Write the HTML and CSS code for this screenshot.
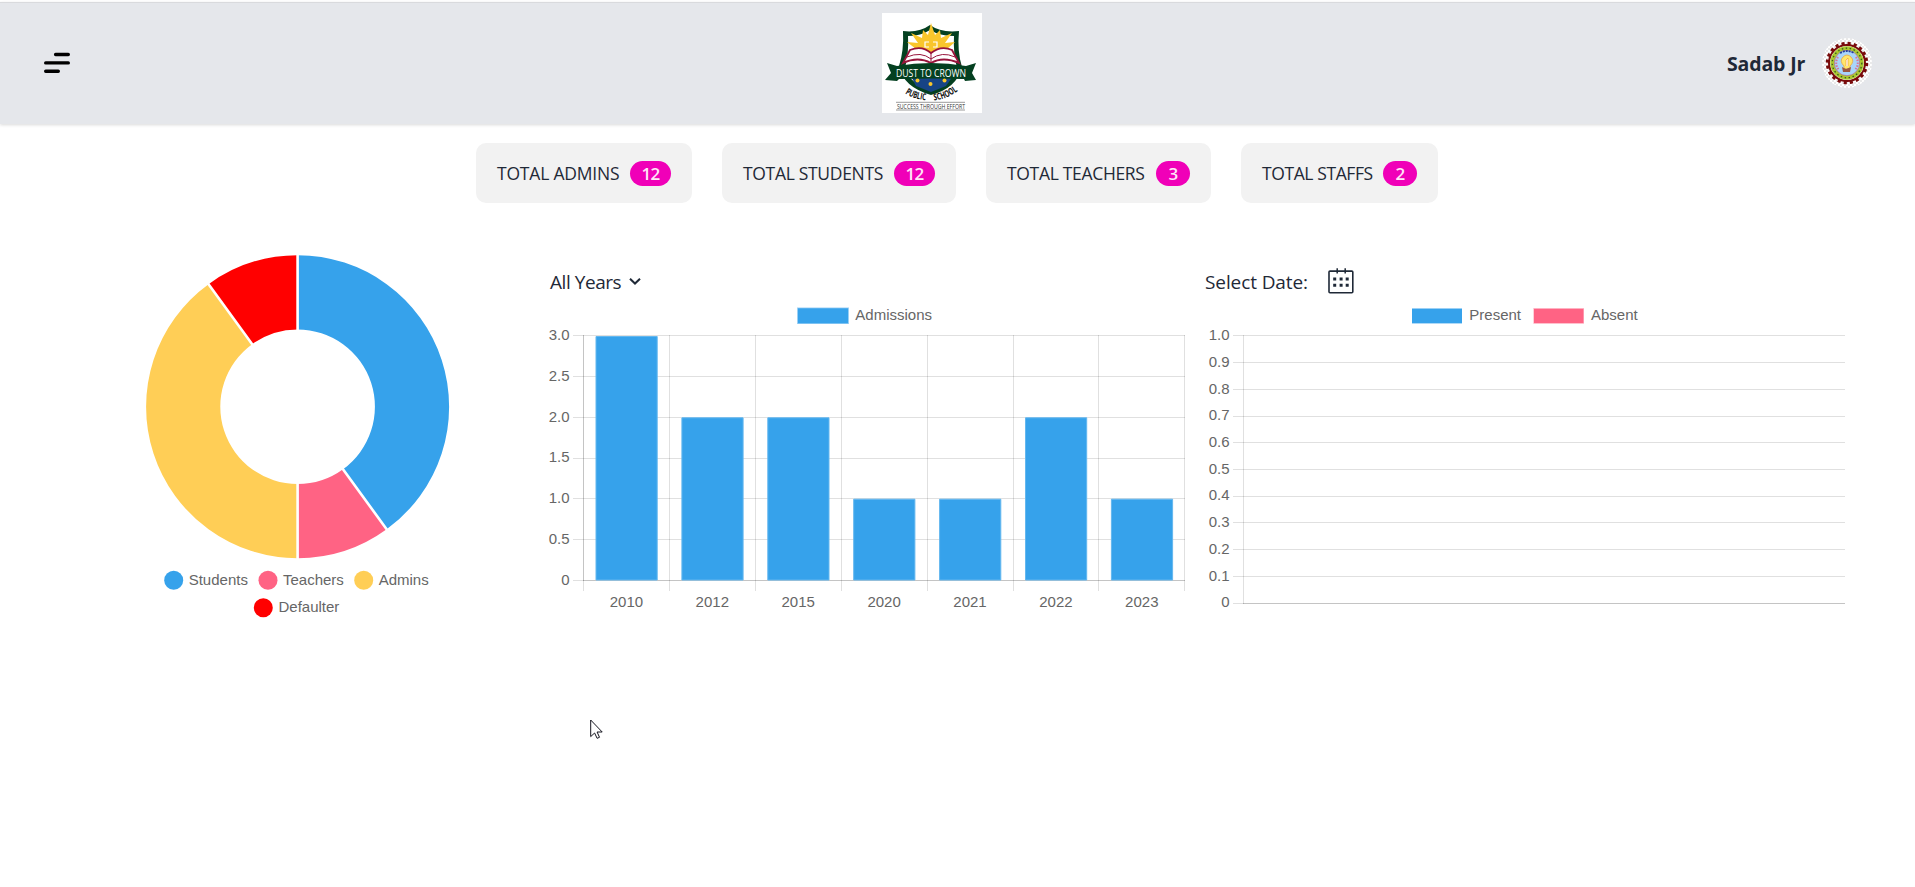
FILE: index.html
```html
<!DOCTYPE html>
<html lang="en">
<head>
<meta charset="utf-8">
<title>School Dashboard</title>
<link rel="stylesheet" href="styles.css">
</head>
<body>
<header class="header">
  <svg class="menu" width="28" height="24" viewBox="0 0 28 24" stroke="#000" stroke-width="3.4" stroke-linecap="round"><path d="M12.6 3.5H25.3M2.7 11.9H25.3M2.7 20.2H15.3"/></svg>
  <svg class="logo" width="100" height="100" viewBox="0 0 100 100">
    <rect width="100" height="100" fill="#fff"/>
    <path d="M48 12Q37 20 21 18Q22 38 17 53Q21 74 49 82Q75 75 80 54Q75 38 77 18Q59 20 48 12Z" fill="#044020"/>
    <path d="M48 17Q39 23 26 23Q27 40 23 55Q28 71 49 77Q69 71 75 55Q71 40 72 23Q58 23 48 17Z" fill="#fff"/>
    <path d="M25 41L34 36L25 29L36 30L29 20L40 25L41 17L46 22L49 10L53 22L58 17L59 25L70 20L63 30L73 29L65 36L73 41Q58 35 49 42Q39 35 25 41Z" fill="#f9c62c"/>
    <path d="M47 29H43V34H47M51 29H55V34H51" fill="none" stroke="#fff" stroke-width="1.2"/>
    <path d="M28 37Q40 32 49 40Q59 32 70 37L77 50Q61 43 49 50Q36 43 21 50Z" fill="#fff" stroke="#97143b" stroke-width="1.8"/>
    <path d="M25 44Q39 38 49 46Q60 38 73 44M49 40V49" fill="none" stroke="#97143b" stroke-width="1"/>
    <path d="M29 63H71L64 73L49 79L34 73Z" fill="#174485"/>
    <path d="M5 50L15 53Q49 47 84 53L94 50L90 60L94 67L83 68L82 66Q49 61 17 66L15 68L3 67L9 60Z" fill="#044020"/>
    <path d="M16 56Q49 50 83 56V66Q49 65 17 66Z" fill="#044020"/>
    <text x="14" y="63.8" class="logo-name" textLength="70" lengthAdjust="spacingAndGlyphs">DUST TO CROWN</text>
    <g fill="#f9c62c"><circle cx="35.5" cy="67.5" r="2"/><circle cx="48.5" cy="71" r="2"/><circle cx="62.5" cy="67.5" r="2"/></g>
    <path id="arc-left" d="M23 80.5Q32 86.5 46 87.5" fill="none"/>
    <path id="arc-right" d="M52 87.5Q66 86 77 77" fill="none"/>
    <text class="logo-sub"><textPath href="#arc-left" textLength="22" lengthAdjust="spacingAndGlyphs">PUBLIC</textPath></text>
    <text class="logo-sub"><textPath href="#arc-right" textLength="26" lengthAdjust="spacingAndGlyphs">SCHOOL</textPath></text>
    <path d="M14 89.3H83M14 97H83" stroke="#555" stroke-width=".6"/>
    <text x="15" y="95.7" class="logo-motto" textLength="68" lengthAdjust="spacingAndGlyphs">SUCCESS THROUGH EFFORT</text>
  </svg>
  <div class="user">
    <span class="user-name">Sadab Jr</span>
    <svg width="50" height="50" viewBox="0 0 50 50">
      <defs><pattern id="check" width="4" height="4" patternUnits="userSpaceOnUse"><rect width="4" height="4" fill="#fff"/><path d="M0 0h2v2H0zM2 2h2v2H2z" fill="#e9e9e9"/></pattern></defs>
      <circle cx="25" cy="25" r="25" fill="url(#check)"/>
      <circle cx="25" cy="25" r="19.5" fill="none" stroke="#790b0b" stroke-width="3.4" stroke-dasharray="3.1 3.026"/>
      <circle cx="25" cy="25" r="18" fill="#fff" stroke="#790b0b" stroke-width="2"/>
      <circle cx="25" cy="25" r="14.8" fill="#a8d5fb" stroke="#a9c92f" stroke-width="3.8"/>
      <circle cx="25" cy="25" r="14.8" fill="none" stroke="#395820" stroke-width="1.3" stroke-dasharray="1.5 2.5"/>
      <circle cx="25" cy="25" r="12.7" fill="none" stroke="#b83b42" stroke-width=".5"/>
      <path d="M18 15Q25 11 32 15" fill="none" stroke="#243f9d" stroke-width="1.8" stroke-dasharray="2 1"/>
      <path d="M16 19Q12 26 17 32M34 19Q38 26 33 32" fill="none" stroke="#d77698" stroke-width="2" stroke-dasharray="1.5 1.4"/>
      <path d="M22 28Q17 23 21 19Q25 15 29 19Q33 23 28 28V31H22Z" fill="#ffe66b" stroke="#e8a943" stroke-width=".8"/>
      <path d="M24 28V22L26 20V28" fill="#fff" stroke="#ef9c31" stroke-width=".7"/>
      <path d="M20 29L24 31L29 29L28 34H21Z" fill="#9b5643"/>
    </svg>
  </div>
</header>

<main>
  <section class="stats">
    <div class="stat"><span class="stat-label w-admins">TOTAL ADMINS</span><span class="badge wide">12</span></div>
    <div class="stat"><span class="stat-label w-students">TOTAL STUDENTS</span><span class="badge wide">12</span></div>
    <div class="stat"><span class="stat-label w-teachers">TOTAL TEACHERS</span><span class="badge">3</span></div>
    <div class="stat"><span class="stat-label w-staffs">TOTAL STAFFS</span><span class="badge">2</span></div>
  </section>

  <section class="charts">
    <svg class="chart" width="340" height="390" viewBox="130 240 340 390">
      <g transform="translate(297.6 406.7)">
        <path d="M0-151.5A151.5 151.5 0 0 1 89.05 122.57L45.44 62.54A77.3 77.3 0 0 0 0-77.3Z" fill="#36a2eb"/>
        <path d="M89.05 122.57A151.5 151.5 0 0 1 0 151.5V77.3A77.3 77.3 0 0 0 45.44 62.54Z" fill="#ff6384"/>
        <path d="M0 151.5A151.5 151.5 0 0 1-89.05-122.57L-45.44-62.54A77.3 77.3 0 0 0 0 77.3Z" fill="#ffce56"/>
        <path d="M-89.05-122.57A151.5 151.5 0 0 1 0-151.5V-77.3A77.3 77.3 0 0 0-45.44-62.54Z" fill="red"/>
        <path d="M0-153V-76M0 153V76M89.93 123.78L44.67 61.49M-89.93-123.78L-44.67-61.49" stroke="#fff" stroke-width="2.6"/>
      </g>
      <circle cx="173.7" cy="580.3" r="9.5" fill="#36a2eb"/><text x="188.7" y="585">Students</text>
      <circle cx="268" cy="580.3" r="9.5" fill="#ff6384"/><text x="283" y="585">Teachers</text>
      <circle cx="363.7" cy="580.3" r="9.5" fill="#ffce56"/><text x="378.7" y="585">Admins</text>
      <circle cx="263.3" cy="607.7" r="9.5" fill="red"/><text x="278.5" y="612">Defaulter</text>
    </svg>

    <div class="panel panel-admissions">
      <div class="control"><span class="w-years">All Years</span>
        <svg width="12" height="8" viewBox="0 0 12 8" fill="none" stroke="#1f2937" stroke-width="2"><path d="M1 .7L6 5.5L11 .7"/></svg>
      </div>
      <svg class="chart" width="650" height="320" viewBox="540 300 650 320">
        <rect x="797" y="307.5" width="52" height="16.5" fill="#9bd0f5"/><rect x="798" y="308.3" width="50" height="15" fill="#36a2eb"/>
        <text x="855.3" y="320">Admissions</text>
        <path d="M573 335.5H1185M573 376.5H1185M573 417.5H1185M573 458.5H1185M573 498.5H1185M573 539.5H1185M573 580.5H1185M583.5 335V591M669.5 335V591M755.5 335V591M841.5 335V591M927.5 335V591M1013.5 335V591M1098.5 335V591M1184.5 335V591" stroke="#000" stroke-opacity=".12"/>
        <path d="M583.5 335V581M583 580.5H1185" stroke="#000" stroke-opacity=".12"/>
        <g fill="#36a2eb" stroke="#63b7ef">
          <path d="M596 580V336.5H657.2V580Z"/><path d="M681.9 580V417.8H743.1V580Z"/><path d="M767.8 580V417.8H829V580Z"/><path d="M853.7 580V499.2H914.9V580Z"/><path d="M939.6 580V499.2H1000.8V580Z"/><path d="M1025.5 580V417.8H1086.7V580Z"/><path d="M1111.4 580V499.2H1172.6V580Z"/>
        </g>
        <g text-anchor="end"><text x="569.5" y="340">3.0</text><text x="569.5" y="381">2.5</text><text x="569.5" y="422">2.0</text><text x="569.5" y="462">1.5</text><text x="569.5" y="503">1.0</text><text x="569.5" y="544">0.5</text><text x="569.5" y="585">0</text></g>
        <g text-anchor="middle"><text x="626.4" y="607">2010</text><text x="712.3" y="607">2012</text><text x="798.2" y="607">2015</text><text x="884.1" y="607">2020</text><text x="970" y="607">2021</text><text x="1055.9" y="607">2022</text><text x="1141.8" y="607">2023</text></g>
      </svg>
    </div>

    <div class="panel panel-attendance">
      <div class="control"><span class="w-date">Select Date:</span>
        <svg class="calendar" width="26" height="26" viewBox="0 0 26 26" fill="none" stroke="#1f2937"><rect x="1" y="3.1" width="23.8" height="21.6" rx="1" stroke-width="1.6"/><path d="M9.2.2V5.5M17.2.2V5.5" stroke-width="1.5"/><path d="M5.2 11.1h3M11.6 11.1h3M17.7 11.1h3M5.2 17.2h3M11.6 17.2h3M17.7 17.2h3" stroke-width="3"/></svg>
      </div>
      <svg class="chart" width="660" height="320" viewBox="1195 300 660 320">
        <rect x="1412" y="308" width="50" height="15.8" fill="#9bd0f5"/><rect x="1412" y="309" width="50" height="14" fill="#36a2eb"/><text x="1469.3" y="320">Present</text>
        <rect x="1533.4" y="308" width="50.5" height="15.8" fill="#ffb1c1"/><rect x="1534" y="309" width="49.4" height="14" fill="#ff6384"/><text x="1591" y="320">Absent</text>
        <path d="M1233 335.5H1845M1233 362.5H1845M1233 389.5H1845M1233 416.5H1845M1233 442.5H1845M1233 469.5H1845M1233 496.5H1845M1233 522.5H1845M1233 549.5H1845M1233 576.5H1845M1233 603.5H1845M1243.5 335V604" stroke="#000" stroke-opacity=".12"/>
        <path d="M1243 603.5H1845" stroke="#000" stroke-opacity=".12"/>
        <g text-anchor="end"><text x="1229.5" y="340">1.0</text><text x="1229.5" y="367">0.9</text><text x="1229.5" y="394">0.8</text><text x="1229.5" y="420">0.7</text><text x="1229.5" y="447">0.6</text><text x="1229.5" y="474">0.5</text><text x="1229.5" y="500">0.4</text><text x="1229.5" y="527">0.3</text><text x="1229.5" y="554">0.2</text><text x="1229.5" y="581">0.1</text><text x="1229.5" y="607">0</text></g>
      </svg>
    </div>
  </section>
</main>
<svg class="cursor" width="14" height="21" viewBox="0 0 14 21"><path d="M.7 1V17.6L4.6 14L7.1 19.3L9.5 18.3L7.1 13H12.2Z" fill="#fff" stroke="#15151f" stroke-width="1"/></svg>
</body>
</html>
```
FILE: styles.css
```css
* { box-sizing: border-box; }
body {
  margin: 0;
  padding-top: 2px;
  height: 887px;
  overflow: hidden;
  background: #fff;
  color: #1f2937;
  font-family: "Open Sans", "Noto Sans", sans-serif;
}
svg { display: block; flex: none; }
.header {
  display: grid;
  grid-template-columns: 882px 100px 1fr;
  align-items: center;
  height: 122px;
  padding-bottom: 1px;
  background: #e5e7eb;
  border-top: 1px solid #d9dadd;
  box-shadow: 0 1px 3px rgba(0, 0, 0, .15);
}
.menu { margin-left: 43px; }
.user {
  display: flex;
  align-items: center;
  justify-content: flex-end;
  gap: 15px;
  padding-right: 43px;
}
.user-name { width: 80px; font-size: 19.5px; font-weight: 700; letter-spacing: -.15px; white-space: nowrap; }
.logo-name { font: 11px "Open Sans", sans-serif; fill: #fff; }
.logo-sub { font: bold 9.5px "Open Sans", sans-serif; fill: #111; }
.logo-motto { font: 7px "Open Sans", sans-serif; fill: #333; }

.stats { display: flex; gap: 30px; padding: 19px 0 0 476px; }
.stat {
  display: flex;
  align-items: center;
  height: 60px;
  padding: 0 21px;
  border-radius: 10px;
  background: #f2f2f2;
}
.stat-label { font-size: 17.5px; letter-spacing: -.32px; white-space: nowrap; }
.w-admins { width: 133px; letter-spacing: -.2px; }
.w-students { width: 151px; }
.w-teachers { width: 149px; }
.w-staffs { width: 121px; letter-spacing: -.4px; }
.badge {
  width: 34px;
  height: 25px;
  border-radius: 13px;
  background: #f000b8;
  color: #ffe4f7;
  font-size: 17px;
  font-weight: 600;
  letter-spacing: -.8px;
  line-height: 26px;
  text-align: center;
}
.badge.wide { width: 41px; }

.charts { display: flex; align-items: flex-start; padding: 37px 0 0 130px; }
.chart text { font: 15px "Liberation Sans", Arial, sans-serif; fill: #666; }
.panel { padding-top: 23px; }
.panel-admissions { margin-left: 70px; }
.panel-attendance { margin-left: 5px; }
.control {
  display: flex;
  align-items: center;
  height: 37px;
  padding-left: 10px;
  font-size: 19px;
  letter-spacing: -.35px;
  white-space: nowrap;
}
.w-years { width: 79px; letter-spacing: -.45px; }
.w-date { width: 123px; letter-spacing: -.1px; }
.calendar { margin-bottom: 2px; }

.cursor { position: absolute; left: 590px; top: 719px; }
```
